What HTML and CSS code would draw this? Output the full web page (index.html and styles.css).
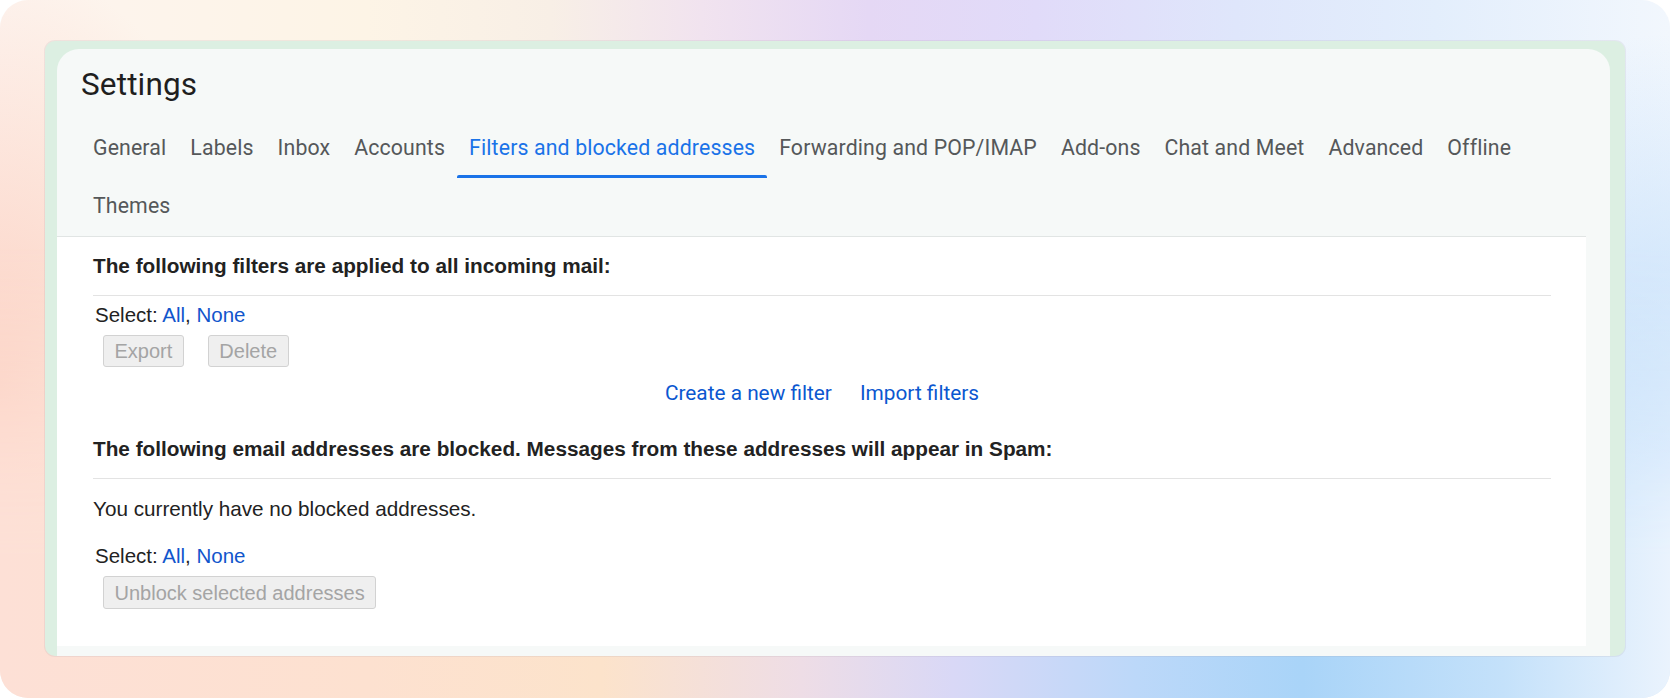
FILE: index.html
```html
<!DOCTYPE html>
<html lang="en">
<head>
<meta charset="utf-8">
<title>Settings</title>
<link rel="stylesheet" href="styles.css">
</head>
<body>
<div class="page">
  <div class="card">
    <div class="panel">
      <div class="main">
        <header class="header">
          <h1 class="title">Settings</h1>
          <nav class="tabs">
            <a class="tab">General</a>
            <a class="tab">Labels</a>
            <a class="tab">Inbox</a>
            <a class="tab">Accounts</a>
            <a class="tab active">Filters and blocked addresses</a>
            <a class="tab">Forwarding and POP/IMAP</a>
            <a class="tab">Add-ons</a>
            <a class="tab">Chat and Meet</a>
            <a class="tab">Advanced</a>
            <a class="tab">Offline</a>
            <a class="tab">Themes</a>
          </nav>
        </header>
        <section class="content">
          <h3 class="section-title">The following filters are applied to all incoming mail:</h3>
          <div class="select">Select: <a class="link">All</a>, <a class="link">None</a></div>
          <div class="btn-row">
            <button class="btn">Export</button>
            <button class="btn">Delete</button>
          </div>
          <div class="actions">
            <a class="action">Create a new filter</a>
            <a class="action">Import filters</a>
          </div>
          <h3 class="section-title second">The following email addresses are blocked. Messages from these addresses will appear in Spam:</h3>
          <p class="note">You currently have no blocked addresses.</p>
          <div class="select select-2">Select: <a class="link">All</a>, <a class="link">None</a></div>
          <div class="btn-row">
            <button class="btn btn-wide">Unblock selected addresses</button>
          </div>
        </section>
      </div>
    </div>
  </div>
</div>
</body>
</html>
```

FILE: styles.css
```css
* { box-sizing: border-box; }
html, body { margin: 0; padding: 0; background: #ffffff; }
body { width: 1670px; height: 698px; overflow: hidden; }

.page {
  position: relative;
  width: 1670px;
  height: 698px;
  border-radius: 28px;
  padding: 41px 45px 42px 45px;
  overflow: hidden;
  background:
    radial-gradient(ellipse 260px 420px at 0% 55%, rgba(252, 204, 188, 0.85), rgba(252, 204, 188, 0) 100%),
    radial-gradient(ellipse 300px 420px at 100% 65%, rgba(178, 214, 250, 0.8), rgba(178, 214, 250, 0) 100%),
    linear-gradient(to right, #fdf4ef 0%, #fdf4e6 22%, #f8efe6 33%, #f1e3ef 42%, #e5d8f5 52%, #e1dbf9 62%, #dfe6fb 74%, #e3eefc 86%, #f2f7fd 100%);
}
.page::before {
  content: "";
  position: absolute;
  inset: 0;
  background: linear-gradient(to right, #fde0d6 0%, #fde1d0 22%, #fce3cb 36%, #eedde6 48%, #d9d8f6 57%, #bcd8f9 68%, #a9d4f8 78%, #c4e1fa 90%, #eaf3fd 100%);
  -webkit-mask-image: linear-gradient(to bottom, transparent 35%, #000 80%);
  mask-image: linear-gradient(to bottom, transparent 35%, #000 80%);
}

.card {
  position: relative;
  width: 1580px;
  height: 615px;
  background: #dcefe2;
  border-radius: 10px;
  padding: 8px 15px 0 12px;
  box-shadow: 0 0 0 1px rgba(150, 130, 150, 0.12);
}

.panel {
  width: 100%;
  height: 100%;
  background: #f6f9f8;
  border-radius: 22px 22px 0 0;
  padding: 0 24px 10px 0;
  display: flex;
}

.main {
  flex: 1;
  display: flex;
  flex-direction: column;
}

.header {
  padding: 16px 0 0 24px;
  border-bottom: 1px solid #e1e5e4;
}

.title {
  margin: 0 0 15px 0;
  font-family: Roboto, "Liberation Sans", sans-serif;
  font-weight: 400;
  font-size: 31.5px;
  line-height: 40px;
  color: #1f1f1f;
  letter-spacing: 0.15px;
}

.tabs {
  display: flex;
  flex-wrap: wrap;
}

.tab {
  position: relative;
  height: 58px;
  padding: 0 12px 2px 12px;
  font-family: Roboto, "Liberation Sans", sans-serif;
  font-size: 21.3px;
  line-height: 56px;
  color: #55585a;
  letter-spacing: 0.13px;
  white-space: nowrap;
}

.tab.active { color: #1a73e8; }
.tab.active::after {
  content: "";
  position: absolute;
  left: 0;
  right: 0;
  bottom: 0;
  height: 3px;
  background: #1a73e8;
  border-radius: 2px 2px 0 0;
}

.content {
  flex: 1;
  background: #ffffff;
  padding: 0 35px 0 36px;
}

.section-title {
  margin: 0;
  padding: 17px 0 17px 0;
  border-bottom: 1px solid #e3e3e3;
  font-family: "Liberation Sans", Arial, sans-serif;
  font-weight: 700;
  font-size: 20.75px;
  line-height: 24px;
  color: #222222;
}
.section-title.second { margin-top: 15px; }

.select {
  margin-top: 8px;
  padding-left: 2px;
  font-family: "Liberation Sans", Arial, sans-serif;
  font-size: 20.5px;
  line-height: 22px;
  color: #222222;
}
.select-2 { margin-top: 25px; }

.link { color: #1155cc; }

.btn-row {
  display: flex;
  gap: 24px;
  margin-top: 9px;
  padding-left: 10px;
}

.btn {
  height: 32px;
  padding: 0 10.5px;
  border: 1px solid #d2d2d2;
  border-radius: 3px;
  background: #efefef;
  font-family: "Liberation Sans", Arial, sans-serif;
  font-size: 20px;
  line-height: 30px;
  color: #a4a4a4;
}
.btn-wide { height: 33px; }

.actions {
  display: flex;
  justify-content: center;
  gap: 28px;
  margin-top: 14px;
  font-family: Roboto, "Liberation Sans", sans-serif;
  font-size: 20.8px;
  line-height: 24px;
}
.action { color: #0b57d0; }

.note {
  margin: 18px 0 0 0;
  font-family: "Liberation Sans", Arial, sans-serif;
  font-size: 20.7px;
  line-height: 24px;
  color: #222222;
}
.note + .select-2 { margin-top: 24px; }
```
